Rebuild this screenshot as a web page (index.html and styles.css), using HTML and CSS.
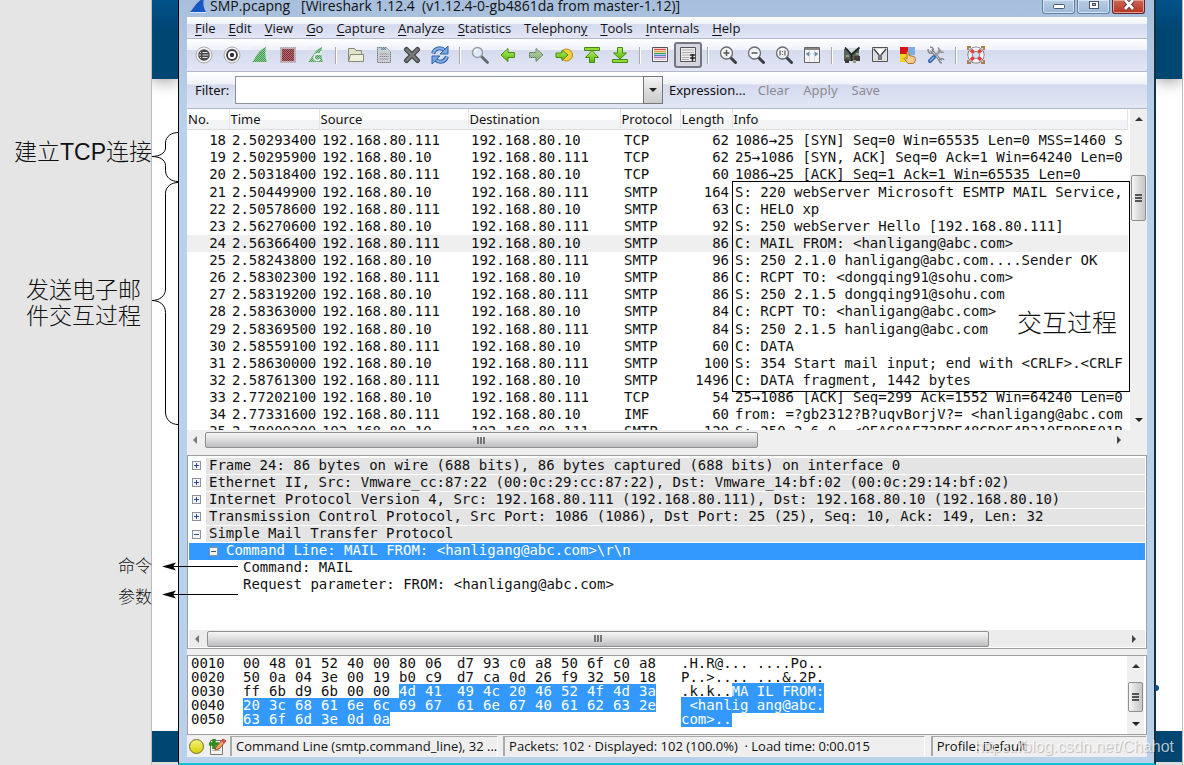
FILE: index.html
```html
<!DOCTYPE html>
<html lang="zh-CN">
<head>
<meta charset="utf-8">
<title>SMP.pcapng</title>
<link rel="stylesheet" href="styles.css">
</head>
<body>
<div class="stage">
  <aside class="notes">
    <p class="note note-tcp">建立TCP连接</p>
    <p class="note note-mail">发送电子邮<br>件交互过程</p>
    <p class="note note-small note-cmd">命令</p>
    <p class="note note-small note-param">参数</p>
  </aside>
  <div class="slide-edge">
    <div class="band band-top"></div>
    <svg class="braces" width="27" height="300" viewBox="0 0 27 300" fill="none" stroke="#000"><path d="M26.500 2.500C20 2.500 13.500 6 13.500 13v5c0 5-6 8.500-13.500 8.500 7 0 13.500 3 13.500 9v5c0 7 6 11 12.500 11"/><path d="M26.500 52.500c-7 0-13 4-13 11V159c0 7-6 11.500-13.500 11.500 7 0 13.500 4 13.500 12V282c0 8 6 12.500 12.500 12.500"/></svg>
    <div class="band band-bottom"></div>
  </div>

  <main class="window">
    <header class="titlebar">
      <svg class="fin" width="17" height="13" viewBox="0 0 17 13"><path d="M0 12C4 8 6 2 14-2c-1 5-1 9 2 14z" fill="#1a57c4"/><path d="M0 12h16v1H0z" fill="#dce8f6"/></svg>
      <h1>SMP.pcapng &nbsp; [Wireshark 1.12.4 &nbsp;(v1.12.4-0-gb4861da from master-1.12)]</h1>
      <div class="caption">
        <button aria-label="Minimize"><svg width="14" height="12"><rect x="1.500" y="4.500" width="11" height="4" rx="1" fill="#fff" stroke="#4c566a"/></svg></button>
        <button aria-label="Maximize"><svg width="14" height="12"><rect x="2.500" y="1.500" width="9" height="7" fill="#fff" stroke="#4c566a"/><rect x="5.500" y="3.500" width="3" height="2" fill="#9db4d0" stroke="#4c566a"/></svg></button>
        <button class="close" aria-label="Close"><svg width="14" height="12"><path d="M3 0l8 9M11 0L3 9" stroke="#5a3436" stroke-width="4.500"/><path d="M3 0l8 9M11 0L3 9" stroke="#fff" stroke-width="2.800"/></svg></button>
      </div>
    </header>

    <nav class="menubar">
      <button><u>F</u>ile</button><button><u>E</u>dit</button><button><u>V</u>iew</button><button><u>G</u>o</button><button><u>C</u>apture</button><button><u>A</u>nalyze</button><button><u>S</u>tatistics</button><button>Telephon<u>y</u></button><button><u>T</u>ools</button><button><u>I</u>nternals</button><button><u>H</u>elp</button>
    </nav>

    <svg width="0" height="0" class="defs"><defs>
      <pattern id="mesh" width="2" height="2" patternUnits="userSpaceOnUse"><path d="M0 0h1v1H0zM1 1h1v1H1z" fill="#e0e3f0"/></pattern>
      <linearGradient id="green" x2="0" y2="1"><stop stop-color="#b5ef5a"/><stop offset="1" stop-color="#58b80e"/></linearGradient>
      <linearGradient id="sage" x2="0" y2="1"><stop stop-color="#b0d090"/><stop offset="1" stop-color="#7a9f6e"/></linearGradient>
      <g id="lens"><path d="M11.500 11.500l5 5" stroke="#3b3f45" stroke-width="3" stroke-linecap="round"/><circle cx="7.500" cy="7" r="6" fill="#f4f5f7" stroke="#686c70" stroke-width="1.300"/></g>
    </defs></svg>

    <div class="toolbar">
      <button aria-label="Interfaces"><svg viewBox="0 0 18 18"><circle cx="9" cy="9" r="8" fill="#f2f2f2" stroke="#aaa"/><circle cx="9" cy="9" r="5.800" fill="#494949"/><path d="M7.500 6.500h5M7.500 9h6M7.500 11.500h5M5 6.500h1M4 9h2M5 11.500h1" stroke="#ddd"/></svg></button>
      <button aria-label="Options"><svg viewBox="0 0 18 18"><circle cx="9" cy="9" r="8" fill="#f2f2f2" stroke="#aaa"/><circle cx="9" cy="9" r="5" fill="#fff" stroke="#3c3c3c" stroke-width="1.800"/><circle cx="9" cy="9" r="2.200" fill="#333"/></svg></button>
      <button aria-label="Start"><svg viewBox="0 0 18 18"><path d="M1 16C5 12 7 4 15 1c-1 6-1 10 1 15z" fill="#3fa347"/><path d="M0 0h18v18H0z" fill="url(#mesh)" opacity=".5"/></svg></button>
      <button aria-label="Stop"><svg viewBox="0 0 18 18"><path d="M1 1h16v16H1z" fill="#b9a3aa"/><path d="M3 3h12v12H3z" fill="#86262c"/><path d="M1 1h16v16H1z" fill="url(#mesh)" opacity=".4"/></svg></button>
      <button aria-label="Restart"><svg viewBox="0 0 18 18"><path d="M1 16C5 12 7 4 15 1c-1 6-1 10 1 15z" fill="#4ca455"/><path d="M13 8.500c-3-1.500-6 0-6 3s4 4 6 1.500M10 8h4V5" fill="none" stroke="#f4f8f2" stroke-width="1.600"/><path d="M0 0h18v18H0z" fill="url(#mesh)" opacity=".5"/></svg></button>
      <i class="sep"></i>
      <button aria-label="Open"><svg viewBox="0 0 18 18"><path d="M1.500 15.500v-13h6l1.500 2h5.500v4" fill="#dfe3c8" stroke="#838b70"/><path d="M3.500 8.500h13v7h-15z" fill="#eff1dd" stroke="#838b70"/></svg></button>
      <button aria-label="Save file"><svg viewBox="0 0 18 18"><path d="M2.500 1.500h9l4 4v11h-13z" fill="#c4c8c8" stroke="#75797c"/><path d="M6 1h5v3H6z" fill="#5a8ca2"/><path d="M4.500 8h9M4.500 10.500h9M4.500 13h9" stroke="#888"/><path d="M0 0h18v18H0z" fill="url(#mesh)" opacity=".5"/></svg></button>
      <button aria-label="Close file"><svg viewBox="0 0 18 18"><path d="M3.500 3.500l11 11M14.500 3.500l-11 11" stroke="#454545" stroke-width="5" stroke-linecap="round"/><path d="M3.500 3.500l11 11M14.500 3.500l-11 11" stroke="#777" stroke-width="2.500" stroke-linecap="round"/></svg></button>
      <button aria-label="Reload"><svg viewBox="0 0 18 18" fill="none"><path d="M2 7.500C4 1.500 10 1 14 4.500" stroke="#3363a8" stroke-width="4"/><path d="M2 7.500C4 1.500 10 1 14 4.500" stroke="#86b2e4" stroke-width="2"/><path d="M17 0v8H9z" fill="#78a7dd" stroke="#3363a8"/><path d="M16 10.500C14 16.500 8 17 4 13.500" stroke="#3363a8" stroke-width="4"/><path d="M16 10.500C14 16.500 8 17 4 13.500" stroke="#86b2e4" stroke-width="2"/><path d="M1 18v-8h8z" fill="#78a7dd" stroke="#3363a8"/></svg></button>
      <i class="sep"></i>
      <button aria-label="Find"><svg viewBox="0 0 18 18"><path d="M10.500 10.500l6 6" stroke="#63676c" stroke-width="2.800" stroke-linecap="round"/><circle cx="6.500" cy="6.500" r="5" fill="#dfeaf8" stroke="#9a9da2" stroke-width="1.500"/><path d="M3.500 6.500a3 3 0 013-3" stroke="#fff" stroke-width="1.500" fill="none"/></svg></button>
      <button aria-label="Back"><svg viewBox="0 0 18 18"><path d="M2 9l7-6.500v4h6.500v5H9v4z" fill="url(#green)" stroke="#448b13"/></svg></button>
      <button aria-label="Forward"><svg viewBox="0 0 18 18"><path d="M16 9L9 2.500v4H2.500v5H9v4z" fill="url(#sage)" stroke="#567a4c"/><path d="M0 0h18v18H0z" fill="url(#mesh)" opacity=".35"/></svg></button>
      <button aria-label="Go to packet"><svg viewBox="0 0 18 18"><circle cx="11.500" cy="9" r="6" fill="#f6ce35" stroke="#b68c1c"/><path d="M13 9L7 4v3H1v4.500h6v3z" fill="url(#green)" stroke="#448b13"/></svg></button>
      <button aria-label="First packet"><svg viewBox="0 0 18 18"><path d="M1.500 1.500h15v3h-15z" fill="#91db38" stroke="#448b13"/><path d="M9 4.500l6.500 7h-4v5h-5v-5h-4z" fill="url(#green)" stroke="#448b13"/></svg></button>
      <button aria-label="Last packet"><svg viewBox="0 0 18 18"><path d="M9 13L2.500 7h4V1.500h5V7h4z" fill="url(#green)" stroke="#448b13"/><path d="M1.500 13.500h15v3h-15z" fill="#91db38" stroke="#448b13"/></svg></button>
      <i class="sep"></i>
      <button aria-label="Colorize"><svg viewBox="0 0 18 18"><path d="M1.500 1.500h15v14h-15z" fill="#fafafa" stroke="#555"/><path d="M3 3.500h12" stroke="#e44" stroke-width="1.400"/><path d="M3 5.500h12" stroke="#d9a93e" stroke-width="1.400"/><path d="M3 7.500h12" stroke="#4a9a4f" stroke-width="1.400"/><path d="M3 9.500h12" stroke="#4584d8" stroke-width="1.400"/><path d="M3 11.500h12" stroke="#b25bc9" stroke-width="1.400"/><path d="M3 13.500h12" stroke="#ccc"/></svg></button>
      <button class="pressed" aria-label="Auto scroll" aria-pressed="true"><svg viewBox="0 0 18 18"><path d="M1.500 1.500h15v14h-15z" fill="#eee" stroke="#555"/><path d="M3 4h12M3 6.500h12M3 9h8M3 11.500h7M3 13.500h7" stroke="#aaa"/><path d="M11 9h5M11 12h5M13.500 8v7" stroke="#222" stroke-width="1.500"/></svg></button>
      <i class="sep"></i>
      <button aria-label="Zoom in"><svg viewBox="0 0 18 18"><use href="#lens"/><path d="M4.500 7h6M7.500 4v6" stroke="#555" stroke-width="1.500"/></svg></button>
      <button aria-label="Zoom out"><svg viewBox="0 0 18 18"><use href="#lens"/><path d="M4.500 7h6" stroke="#555" stroke-width="1.500"/></svg></button>
      <button aria-label="Normal size"><svg viewBox="0 0 18 18"><use href="#lens"/><path d="M5 4.500v5M10 4.500v5M7.500 5v1M7.500 8v1" stroke="#555" stroke-width="1.200"/></svg></button>
      <button aria-label="Resize columns"><svg viewBox="0 0 18 18"><path d="M1.500 1.500h15v15h-15z" fill="#f5f5f5" stroke="#666"/><path d="M2 2h14v2H2z" fill="#888"/><path d="M6.500 4v12M11.500 4v12" stroke="#dadde0"/><path d="M3 8l3-2v4zM15 8l-3-2v4zM7 8h1M10 8h1" fill="#5d87ad" stroke="#5d87ad" stroke-width=".5"/></svg></button>
      <i class="sep"></i>
      <button aria-label="Capture filters"><svg viewBox="0 0 18 18"><path d="M1 3h15v12H1z" fill="#596358"/><path d="M3 2h11L8.500 9z" fill="#d3dae3"/><path d="M2 1.500l6.500 7 8-7M8.500 8v7" stroke="#222" stroke-width="1.800" fill="none"/><path d="M2 13h4v4H2zM11 10h6v5h-6z" fill="#443c34"/><path d="M10 14h3v3h-3zM3 9h3v2H3zM13 7h3v2h-3z" fill="#8ea184"/></svg></button>
      <button aria-label="Display filters"><svg viewBox="0 0 18 18"><path d="M1.500 1.500h15v14h-15z" fill="#dedede" stroke="#555"/><path d="M3 3l5 6v5h2V9l5-6z" fill="#fff"/><path d="M3 3l5 6v5M15 3l-5 6v5" stroke="#3f4854" stroke-width="1.400" fill="none"/></svg></button>
      <button aria-label="Coloring rules"><svg viewBox="0 0 18 18"><path d="M1 1h8v8H1z" fill="#d91418"/><path d="M9 1h7v8H9z" fill="#7caee3"/><path d="M1 8h8v8H1z" fill="#f2d41c"/><path d="M8 5.500c2 0 2 1 2 4l5 1c2 .5 2 6-1 7h-5l-4-5 1-1 2 1.500V6z" fill="#f6c98c" stroke="#a77438"/></svg></button>
      <button aria-label="Preferences"><svg viewBox="0 0 18 18"><path d="M4 4l10 11" stroke="#80858a" stroke-width="3"/><path d="M4 4l10 11" stroke="#dadde0"/><path d="M1 3c0 4 2 5 5 4M3 1c3 0 4 2 3 5M12 15c1-3 4-3 5-1M12 13c0 3 1 4 3 4" stroke="#858a8e" stroke-width="1.500" fill="none"/><path d="M14 4L8 10" stroke="#9ca0a5" stroke-width="2.500"/><path d="M12 2v4h4M11 1l1 3M17 6l-3 1" stroke="#888" fill="none"/><path d="M7 11l-4 4" stroke="#3466ae" stroke-width="4" stroke-linecap="round"/><path d="M7 11l-4 4" stroke="#8db7ec" stroke-width="1.500"/></svg></button>
      <i class="sep"></i>
      <button aria-label="Help contents"><svg viewBox="0 0 18 18"><path d="M1 4V1h3M14 1h3v3M17 14v3h-3M4 17H1v-3" fill="none" stroke="#a5824d" stroke-width="2"/><circle cx="9" cy="9" r="5.800" fill="none" stroke="#666" stroke-width="5.500"/><circle cx="9" cy="9" r="5.800" fill="none" stroke="#f7f7f7" stroke-width="4"/><path d="M4 4l2.500 2.500M14 4l-2.500 2.500M4 14l2.500-2.500M14 14l-2.500-2.500" stroke="#f0353b" stroke-width="3.500"/></svg></button>
    </div>

    <div class="filterbar">
      <label for="filter">Filter:</label>
      <div class="combo"><input id="filter" type="text"><button aria-label="Filter history"><i class="tri down"></i></button></div>
      <button class="text-btn">Expression...</button>
      <button class="text-btn" disabled>Clear</button>
      <button class="text-btn" disabled>Apply</button>
      <button class="text-btn" disabled>Save</button>
    </div>

    <section class="packets">
      <div class="packet-view">
        <table class="packet-table">
          <colgroup><col class="c-no"><col class="c-time"><col class="c-src"><col class="c-dst"><col class="c-proto"><col class="c-len"><col></colgroup>
          <thead><tr><th>No.</th><th>Time</th><th>Source</th><th>Destination</th><th>Protocol</th><th>Length</th><th>Info</th></tr></thead>
          <tbody>
          <tr><td>18</td><td>2.50293400</td><td>192.168.80.111</td><td>192.168.80.10</td><td>TCP</td><td>62</td><td>1086→25 [SYN] Seq=0 Win=65535 Len=0 MSS=1460 S</td></tr>
          <tr><td>19</td><td>2.50295900</td><td>192.168.80.10</td><td>192.168.80.111</td><td>TCP</td><td>62</td><td>25→1086 [SYN, ACK] Seq=0 Ack=1 Win=64240 Len=0</td></tr>
          <tr><td>20</td><td>2.50318400</td><td>192.168.80.111</td><td>192.168.80.10</td><td>TCP</td><td>60</td><td>1086→25 [ACK] Seq=1 Ack=1 Win=65535 Len=0</td></tr>
          <tr><td>21</td><td>2.50449900</td><td>192.168.80.10</td><td>192.168.80.111</td><td>SMTP</td><td>164</td><td>S: 220 webServer Microsoft ESMTP MAIL Service,</td></tr>
          <tr><td>22</td><td>2.50578600</td><td>192.168.80.111</td><td>192.168.80.10</td><td>SMTP</td><td>63</td><td>C: HELO xp</td></tr>
          <tr><td>23</td><td>2.56270600</td><td>192.168.80.10</td><td>192.168.80.111</td><td>SMTP</td><td>92</td><td>S: 250 webServer Hello [192.168.80.111]</td></tr>
          <tr class="current"><td>24</td><td>2.56366400</td><td>192.168.80.111</td><td>192.168.80.10</td><td>SMTP</td><td>86</td><td>C: MAIL FROM: &lt;hanligang@abc.com&gt;</td></tr>
          <tr><td>25</td><td>2.58243800</td><td>192.168.80.10</td><td>192.168.80.111</td><td>SMTP</td><td>96</td><td>S: 250 2.1.0 hanligang@abc.com....Sender OK</td></tr>
          <tr><td>26</td><td>2.58302300</td><td>192.168.80.111</td><td>192.168.80.10</td><td>SMTP</td><td>86</td><td>C: RCPT TO: &lt;dongqing91@sohu.com&gt;</td></tr>
          <tr><td>27</td><td>2.58319200</td><td>192.168.80.10</td><td>192.168.80.111</td><td>SMTP</td><td>86</td><td>S: 250 2.1.5 dongqing91@sohu.com</td></tr>
          <tr><td>28</td><td>2.58363000</td><td>192.168.80.111</td><td>192.168.80.10</td><td>SMTP</td><td>84</td><td>C: RCPT TO: &lt;hanligang@abc.com&gt;</td></tr>
          <tr><td>29</td><td>2.58369500</td><td>192.168.80.10</td><td>192.168.80.111</td><td>SMTP</td><td>84</td><td>S: 250 2.1.5 hanligang@abc.com</td></tr>
          <tr><td>30</td><td>2.58559100</td><td>192.168.80.111</td><td>192.168.80.10</td><td>SMTP</td><td>60</td><td>C: DATA</td></tr>
          <tr><td>31</td><td>2.58630000</td><td>192.168.80.10</td><td>192.168.80.111</td><td>SMTP</td><td>100</td><td>S: 354 Start mail input; end with &lt;CRLF&gt;.&lt;CRLF</td></tr>
          <tr><td>32</td><td>2.58761300</td><td>192.168.80.111</td><td>192.168.80.10</td><td>SMTP</td><td>1496</td><td>C: DATA fragment, 1442 bytes</td></tr>
          <tr><td>33</td><td>2.77202100</td><td>192.168.80.10</td><td>192.168.80.111</td><td>TCP</td><td>54</td><td>25→1086 [ACK] Seq=299 Ack=1552 Win=64240 Len=0</td></tr>
          <tr><td>34</td><td>2.77331600</td><td>192.168.80.111</td><td>192.168.80.10</td><td>IMF</td><td>60</td><td>from: =?gb2312?B?uqvBorjV?= &lt;hanligang@abc.com</td></tr>
          <tr><td>35</td><td>2.78000200</td><td>192.168.80.10</td><td>192.168.80.111</td><td>SMTP</td><td>120</td><td>S: 250 2.6.0 &nbsp;&lt;0EAG8AE73BDE48GD0E4B310EB0D501B</td></tr>
          </tbody>
        </table>
      </div>
      <div class="vbar packets-vbar"><i class="tri up"></i><div class="vthumb"><i class="grip"></i></div><i class="tri down"></i></div>
      <div class="session-box"><span>交互过程</span></div>
    </section>
    <div class="hbar packets-hbar"><i class="tri left"></i><div class="htrack"><div class="hthumb"><i class="grip"></i></div></div><i class="tri right"></i></div>

    <section class="details">
      <ul class="tree">
        <li><button class="exp" aria-label="Expand"></button><span>Frame 24: 86 bytes on wire (688 bits), 86 bytes captured (688 bits) on interface 0</span></li>
        <li><button class="exp" aria-label="Expand"></button><span>Ethernet II, Src: Vmware_cc:87:22 (00:0c:29:cc:87:22), Dst: Vmware_14:bf:02 (00:0c:29:14:bf:02)</span></li>
        <li><button class="exp" aria-label="Expand"></button><span>Internet Protocol Version 4, Src: 192.168.80.111 (192.168.80.111), Dst: 192.168.80.10 (192.168.80.10)</span></li>
        <li><button class="exp" aria-label="Expand"></button><span>Transmission Control Protocol, Src Port: 1086 (1086), Dst Port: 25 (25), Seq: 10, Ack: 149, Len: 32</span></li>
        <li><button class="exp minus" aria-label="Collapse"></button><span>Simple Mail Transfer Protocol</span></li>
        <li class="selected"><button class="exp minus" aria-label="Collapse"></button><span>Command Line: MAIL FROM: &lt;hanligang@abc.com&gt;\r\n</span></li>
        <li class="leaf"><span>Command: MAIL</span></li>
        <li class="leaf"><span>Request parameter: FROM: &lt;hanligang@abc.com&gt;</span></li>
      </ul>
      <div class="hbar details-hbar"><i class="tri left"></i><div class="htrack"><div class="hthumb"><i class="grip"></i></div></div><i class="tri right"></i></div>
    </section>

    <section class="bytes">
      <table class="hex">
        <tr><th>0010</th><td>00</td><td>48</td><td>01</td><td>52</td><td>40</td><td>00</td><td>80</td><td>06</td><td class="mid"></td><td>d7</td><td>93</td><td>c0</td><td>a8</td><td>50</td><td>6f</td><td>c0</td><td class="end">a8</td><td class="ascii">.H.R@... ....Po..</td></tr>
        <tr><th>0020</th><td>50</td><td>0a</td><td>04</td><td>3e</td><td>00</td><td>19</td><td>b0</td><td>c9</td><td class="mid"></td><td>d7</td><td>ca</td><td>0d</td><td>26</td><td>f9</td><td>32</td><td>50</td><td class="end">18</td><td class="ascii">P..&gt;.... ...&amp;.2P.</td></tr>
        <tr><th>0030</th><td>ff</td><td>6b</td><td>d9</td><td>6b</td><td>00</td><td>00</td><td class="on">4d</td><td class="on">41</td><td class="mid on"></td><td class="on">49</td><td class="on">4c</td><td class="on">20</td><td class="on">46</td><td class="on">52</td><td class="on">4f</td><td class="on">4d</td><td class="end on">3a</td><td class="ascii">.k.k..<mark>MA IL FROM:</mark></td></tr>
        <tr><th>0040</th><td class="on">20</td><td class="on">3c</td><td class="on">68</td><td class="on">61</td><td class="on">6e</td><td class="on">6c</td><td class="on">69</td><td class="on">67</td><td class="mid on"></td><td class="on">61</td><td class="on">6e</td><td class="on">67</td><td class="on">40</td><td class="on">61</td><td class="on">62</td><td class="on">63</td><td class="end on">2e</td><td class="ascii"><mark> &lt;hanlig ang@abc.</mark></td></tr>
        <tr><th>0050</th><td class="on">63</td><td class="on">6f</td><td class="on">6d</td><td class="on">3e</td><td class="on">0d</td><td class="last">0a</td><td></td><td></td><td class="mid"></td><td></td><td></td><td></td><td></td><td></td><td></td><td></td><td class="end"></td><td class="ascii"><mark>com&gt;..</mark></td></tr>
      </table>
      <div class="vbar bytes-vbar"><i class="tri up"></i><div class="vthumb"><i class="grip"></i></div><i class="tri down"></i></div>
    </section>

    <footer class="status">
      <span class="led"></span>
      <svg class="memo" width="17" height="17" viewBox="0 0 17 17"><path d="M1.500 2.500h12v14h-12z" fill="#f4f4ee" stroke="#777"/><path d="M3.500 10h8M3.500 12.500h8" stroke="#bbb"/><path d="M5 1v10M0 6h10" stroke="#2f8f1e" stroke-width="3.500"/><path d="M6 12l1-3 7-8 3 2-7 8z" fill="#f1a45c" stroke="#9c4a35"/><path d="M13 2l3 2" stroke="#e14b4b" stroke-width="3"/></svg>
      <span class="cell cell-a">Command Line (smtp.command_line), 32 ...</span>
      <span class="cell cell-b">Packets: 102 · Displayed: 102 (100.0%) &nbsp;· Load time: 0:00.015</span>
      <span class="cell cell-c">Profile: Default</span>
    </footer>
  </main>

  <div class="slide-edge slide-right">
    <div class="band band-top"></div>
    <i class="dot"></i>
    <div class="band band-bottom"></div>
  </div>

  <svg class="arrow arrow-cmd" width="76" height="9" viewBox="0 0 76 9"><path d="M8 4.500h68" stroke="#000"/><path d="M0 4.500L14 .5l-3 4 3 4z"/></svg>
  <svg class="arrow arrow-param" width="76" height="9" viewBox="0 0 76 9"><path d="M8 4.500h68" stroke="#000"/><path d="M0 4.500L14 .5l-3 4 3 4z"/></svg>
  <span class="watermark">https://blog.csdn.net/Chahot</span>
</div>
</body>
</html>
```

FILE: styles.css
```css
* { box-sizing: border-box; }
body { margin: 0; background: #fff; font: 13px/18px "Open Sans", "Noto Sans", "Noto Sans CJK SC", sans-serif; color: #111; }
button { font: inherit; color: inherit; border: 0; background: none; padding: 0; margin: 0; }
h1, p, ul { margin: 0; padding: 0; }
svg { display: block; flex: none; }
.defs { position: absolute; }

.stage { position: relative; display: grid; grid-template-columns: 152px 26px minmax(0, 1fr) 28px; min-height: 100vh; overflow: hidden; }

/* slide background */
.notes { position: relative; background: #e5e5e5; border-right: 1px solid #bbb; }
.note { position: absolute; right: 0; font: 300 23px/26px "Liberation Sans", "Noto Sans CJK SC", sans-serif; white-space: nowrap; }
.note-tcp { top: 139px; right: -1px; }
.note-mail { top: 277px; right: 10px; }
.note-small { font-size: 17px; }
.note-cmd { top: 554px; right: -1px; }
.note-param { top: 585px; right: -1px; }
.slide-edge { position: relative; display: flex; flex-direction: column; justify-content: space-between; }
.slide-right { border-right: 1px solid #bbb; margin-right: 1px; }
.band { background: #004673; }
.band-top { height: 79px; background: linear-gradient(#00528a, #004673 30px); box-shadow: 0 2px 16px #999; clip-path: inset(0 0 -20px 0); }
.band-bottom { height: 34px; border-bottom: 3px solid #ddd; }
.braces { position: absolute; left: 0; top: 130px; }
.dot { position: absolute; left: -1px; top: 685px; width: 4px; height: 6px; border-radius: 0 3px 3px 0; background: #0d4a86; }

/* window frame */
.window { position: relative; display: flex; flex-direction: column; min-width: 0; border-left: 1px solid #000; border-right: 2px solid #18323c; border-bottom: 2px solid #16c0dc; padding: 0 7px 6px 8px; background: linear-gradient(#a7bfdc, #b9d1ea 120px); }
.titlebar { display: flex; height: 17px; padding-left: 3px; overflow: hidden; }
.titlebar h1 { flex: 1; margin-left: 3px; font: 14px/12px "Open Sans", sans-serif; white-space: nowrap; }
.caption { display: flex; gap: 2px; padding-right: 2px; }
.caption button { width: 33px; height: 14px; display: flex; justify-content: center; border: 1px solid #65809e; border-top: 0; border-radius: 0 0 3px 3px; background: linear-gradient(#b9cde4, #9db8d6); box-shadow: inset 0 0 0 1px #d5e4f3; }
.caption .close { background: linear-gradient(#cc6858, #b83320); border-color: #5e2630; box-shadow: inset 0 0 0 1px #e2a393; }
.menubar, .toolbar, .filterbar { display: flex; align-items: center; border-bottom: 1px solid #b3b8ca; background: linear-gradient(#fff, #f0f2fa 33%, #d5daee 36%, #e2e6f5); }
.menubar { height: 22px; padding-left: 1px; }
.menubar button { padding: 0 6px 0 7px; }
.menubar u { text-underline-offset: 2px; }
.toolbar { height: 33px; padding-left: 3px; }
.toolbar button { width: 28px; height: 28px; display: grid; place-items: center; border-radius: 3px; }
.toolbar svg { width: 18px; height: 18px; }
.toolbar .pressed { border: 2px solid #74777f; background: #d3d6df; height: 26px; }
.sep { width: 2px; height: 17px; margin: 0 5px; border-left: 1px solid #aaa; border-right: 1px solid #fff; }
.filterbar { height: 37px; padding-left: 8px; font-family: "Noto Sans", sans-serif; }
.filterbar label { width: 40px; }
.combo { display: flex; width: 428px; height: 28px; border: 1px solid #8e929b; background: #fff; }
.combo input { flex: 1; min-width: 0; border: 0; padding: 0 4px; outline: 0; background: #fff; }
.combo button { width: 20px; border: 1px solid #777; background: linear-gradient(#f5f5f5, #ddd 50%, #cbcbcb); display: grid; place-items: center; margin: -1px; height: 28px; }
.text-btn { margin-left: 6px; margin-right: 6px; }
.text-btn:disabled { color: #8b8b90; margin-right: 8px; }
.tri { width: 0; height: 0; border: 4px solid transparent; flex: none; }
.tri.down { border-top-color: #222; border-bottom: 0; }
.tri.up { border-bottom-color: #333; border-top: 0; }
.tri.left { border-right-color: #777; border-left: 0; }
.tri.right { border-left-color: #444; border-right: 0; }

/* packet list */
.packets { position: relative; display: flex; height: 321px; background: #fff; }
.packet-view { flex: 1; min-width: 0; overflow: hidden; border-right: 2px solid #fff; }
.packet-table { width: 100%; table-layout: fixed; border-collapse: collapse; height: 332px; }
.c-no { width: 42px; } .c-time { width: 90px; } .c-src { width: 149px; } .c-dst { width: 152px; } .c-proto { width: 60px; } .c-len { width: 52px; }
.packet-table th { height: 22px; padding: 0 0 0 1px; text-align: left; font: 13px/18px "Noto Sans", sans-serif; background: linear-gradient(#fff 50%, #f2f3f5 55%); border-right: 1px solid #e3e5e8; border-bottom: 3px solid #fff; box-shadow: inset 0 -1px #ddd; }
.packet-table td { padding: 0 0 2px 3px; font: 14px/14px "DejaVu Sans Mono", monospace; white-space: nowrap; overflow: hidden; }
.packet-table td:nth-child(1), .packet-table td:nth-child(6) { text-align: right; padding-right: 3px; }
.packet-table td:nth-child(5) { padding-left: 4px; }
.current { background: #efefef; }
.session-box { position: absolute; left: 545px; right: 17px; top: 72px; height: 211px; border: 1px solid #000; }
.session-box span { position: absolute; right: 12px; top: 124px; font: 300 25px/30px "Noto Sans CJK SC", sans-serif; }

/* scroll bars */
.vbar { display: flex; flex-direction: column; align-items: center; width: 17px; background: #efefef; }
.vthumb { width: 15px; display: grid; place-items: center; border: 1px solid #8f8f8f; border-radius: 2px; background: linear-gradient(90deg, #f6f6f6, #dcdcdc 50%, #c6c6c6); }
.vthumb .grip { width: 7px; height: 9px; background: repeating-linear-gradient(#555 0 2px, transparent 2px 3px); }
.packets-vbar { padding: 8px 0; }
.packets-vbar .vthumb { height: 46px; margin: 54px 0 auto; }
.hbar { display: flex; align-items: center; height: 17px; padding: 0 9px 0 6px; background: #ececec; }
.htrack { flex: 1; margin: 0 5px 0 8px; }
.hthumb { height: 16px; display: grid; place-items: center; border: 1px solid #8f8f8f; border-radius: 2px; background: linear-gradient(#f6f6f6, #dcdcdc 50%, #bdbdc0); }
.hthumb .grip { width: 9px; height: 7px; background: repeating-linear-gradient(90deg, #777 0 2px, transparent 2px 3px); }
.packets-hbar { height: 25px; padding: 1px 26px 6px 6px; background: #efefef; }
.packets-hbar .hthumb { width: 61%; }

/* packet details */
.details { height: 194px; display: flex; flex-direction: column; justify-content: space-between; padding: 1px 1px; background: #fff; border: 1px solid #a0a0a0; margin-bottom: 6px; box-shadow: 0 6px #efefef; }
.tree { list-style: none; display: grid; grid-template-rows: repeat(8, 1fr); height: 137px; font: 14px/15px "DejaVu Sans Mono", monospace; white-space: nowrap; }
.tree li { display: flex; align-items: center; }
.tree span { flex: 1; height: 16px; padding-left: 3px; margin-left: 5px; background: #e4e4e4; }
.exp { width: 9px; height: 9px; margin-left: 3px; border: 1px solid #8b929f; background: linear-gradient(#27489c, #27489c) center / 5px 1px no-repeat, linear-gradient(#27489c, #27489c) center / 1px 5px no-repeat #f6f6f6; flex: none; }
.minus { background: linear-gradient(#36508c, #36508c) center / 5px 1px no-repeat #f6f6f6; }
.tree .selected { background: #3399ff; color: #fff; padding-left: 17px; }
.tree .selected span, .tree .leaf span { background: none; }
.tree .leaf { padding-left: 46px; }
.details-hbar .hthumb { width: 85%; }

/* packet bytes */
.bytes { height: 80px; display: flex; align-items: flex-start; justify-content: space-between; padding: 0 2px 0 3px; background: #fff; border: 1px solid #a0a0a0; }
.hex { border-collapse: collapse; table-layout: fixed; width: 636px; font: 14px/14px "DejaVu Sans Mono", monospace; height: 70px; }
.hex th { width: 52px; padding: 0; text-align: left; font-weight: normal; }
.hex td { width: 26px; height: 14px; padding: 0; }
.hex .mid { width: 6px; }
.hex .end { width: 17px; }
.hex .ascii { width: 171px; padding-left: 25px; white-space: pre; }
.on { background: #3399ff; color: #fff; }
.last { background: linear-gradient(#3399ff, #3399ff) 0 0 / 17px 100% no-repeat; color: #fff; }
mark { background: #3399ff; color: #fff; }
.bytes-vbar { align-self: stretch; padding: 8px 0; justify-content: space-between; }
.bytes-vbar .vthumb { height: 30px; margin-top: 4px; }

/* status bar */
.status { display: flex; align-items: center; height: 22px; padding: 0 1px; background: #efefef; }
.led { width: 15px; height: 15px; margin: 0 5px 0 1px; border: 1px solid #6b6b28; border-radius: 50%; background: linear-gradient(#f4f07a, #d8d40a); }
.cell { height: 20px; line-height: 19px; padding-left: 4px; border-left: 2px solid #a9a9a9; border-top: 1px solid #a9a9a9; white-space: nowrap; overflow: hidden; }
.cell-a { flex: 267; margin-left: 4px; margin-right: 5px; border-right: 1px solid #fff; }
.cell-b { flex: 424; margin-right: 6px; border-right: 1px solid #fff; }
.cell-c { flex: 214; }

.arrow { position: absolute; left: 162px; }
.arrow-cmd { top: 562px; }
.arrow-param { top: 590px; }
.watermark { position: absolute; right: 10px; bottom: 9px; font: 16px/18px "Liberation Sans", sans-serif; color: #ffffffb0; text-shadow: 1px 1px 1px #0000003a; }
```
